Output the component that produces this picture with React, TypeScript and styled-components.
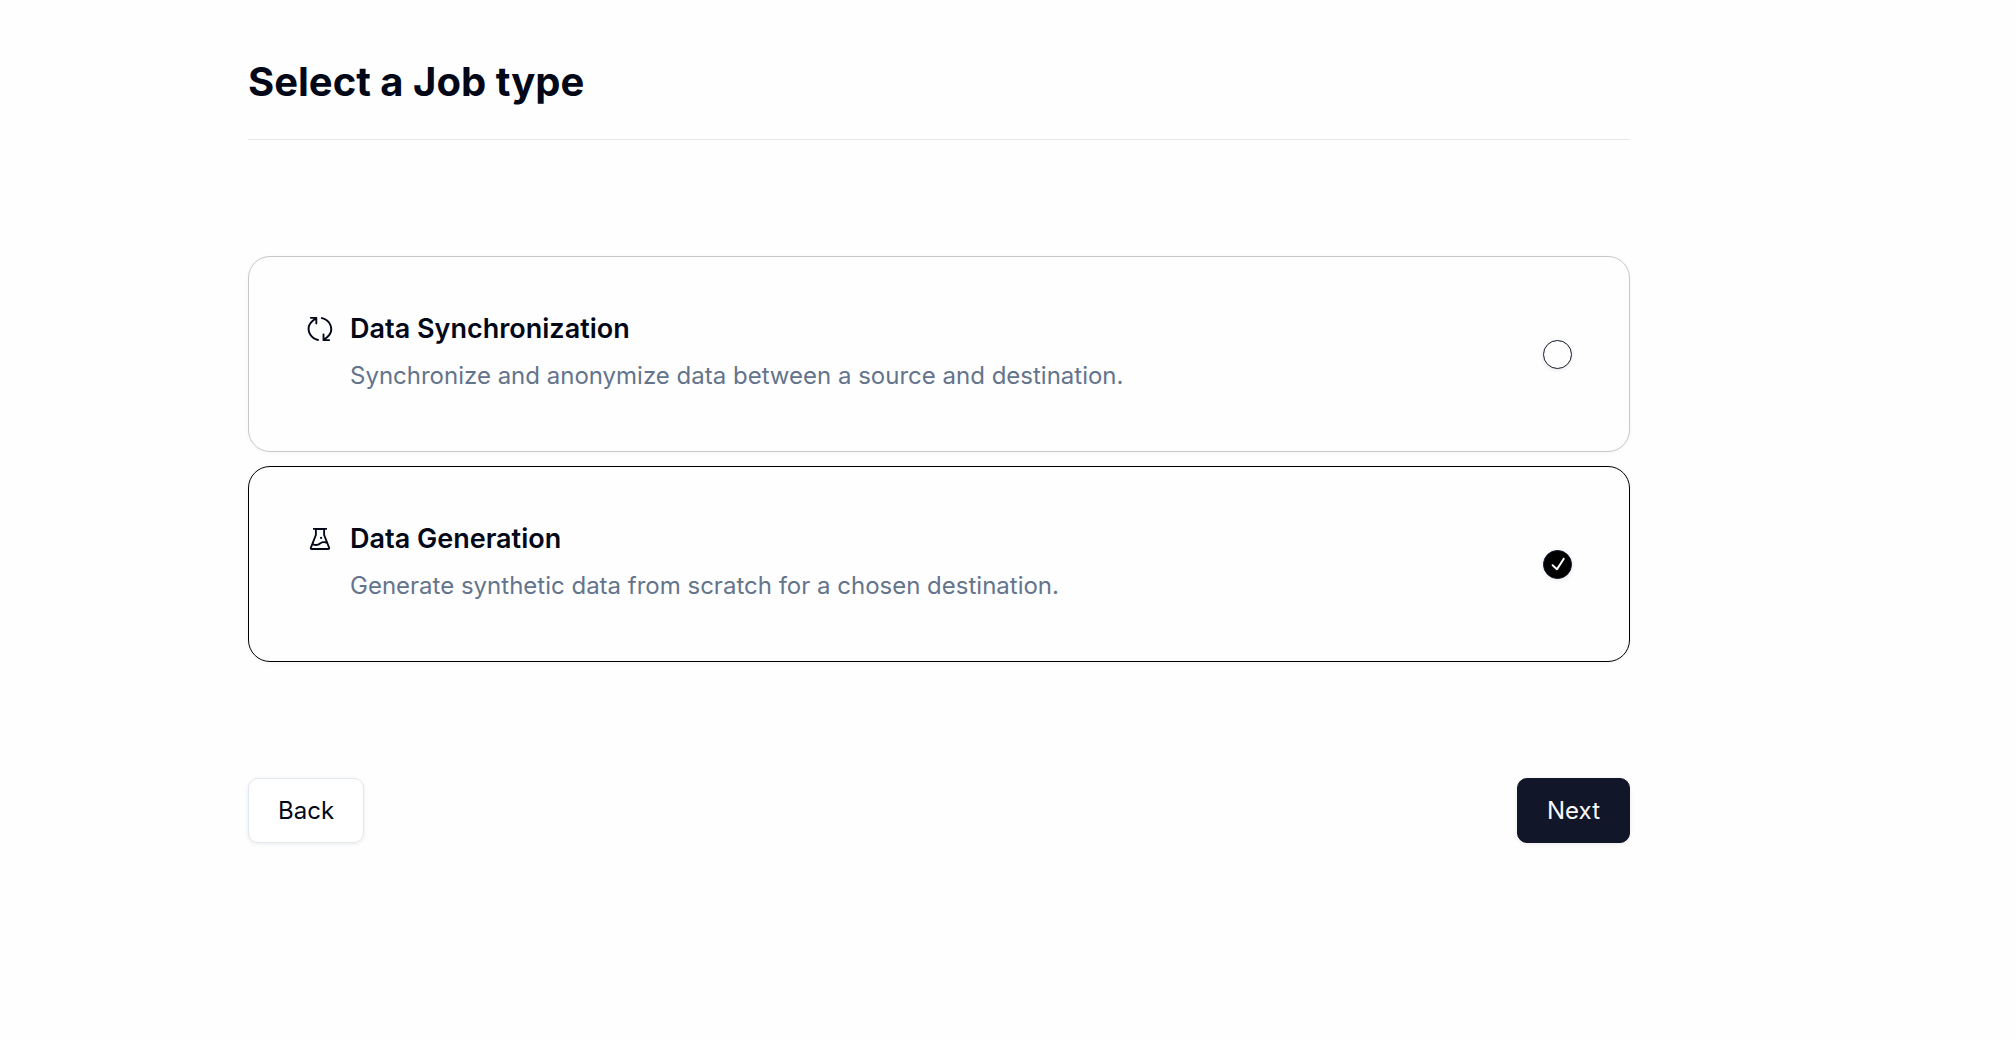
import React, { useState } from 'react';
import styled, { createGlobalStyle } from 'styled-components';
import { RxSymbol, RxCheck } from 'react-icons/rx';
import { AiOutlineExperiment } from 'react-icons/ai';

const GlobalStyle = createGlobalStyle`
  *, *::before, *::after {
    box-sizing: border-box;
  }

  body {
    margin: 0;
    background: #fefefe;
    color: #020817;
    font-family: Inter, 'Liberation Sans', sans-serif;
  }
`;

const Page = styled.main`
  padding: 52px 386px 48px 248px;
`;

const Header = styled.header`
  padding-bottom: 27px;
  border-bottom: 1px solid #e5e7eb;
`;

const Title = styled.h1`
  margin: 0;
  font-size: 40px;
  line-height: 60px;
  font-weight: 700;
`;

const Form = styled.form`
  display: flex;
  flex-direction: column;
  gap: 116px;
  padding-top: 116px;
`;

const Options = styled.div`
  display: flex;
  flex-direction: column;
  gap: 14px;
`;

const Card = styled.label<{ $selected: boolean }>`
  display: flex;
  align-items: center;
  justify-content: space-between;
  padding: 50px 57px;
  border: 1px solid ${(p) => (p.$selected ? '#000000' : '#c8c8c8')};
  border-radius: 22px;
  background: #fefefe;
  box-shadow: 0 1px 4px rgba(0, 0, 0, 0.04);
  cursor: pointer;
`;

const CardText = styled.span`
  display: grid;
  grid-template-columns: 28px 1fr;
  column-gap: 16px;
  align-items: center;
`;

const CardIcon = styled.span`
  display: grid;
  place-items: center;
`;

const CardTitle = styled.span`
  font-size: 27px;
  line-height: 44px;
  font-weight: 600;
`;

const CardDescription = styled.span`
  grid-column: 2;
  color: #64748b;
  font-size: 24px;
  line-height: 50px;
`;

const RadioBox = styled.span`
  display: grid;
  place-items: center;
  color: #ffffff;

  > * {
    grid-area: 1 / 1;
  }

  svg {
    pointer-events: none;
  }
`;

const Radio = styled.input`
  appearance: none;
  width: 29px;
  height: 29px;
  margin: 0;
  border: 1px solid #0f172a;
  border-radius: 50%;
  box-shadow: 0 1px 4px rgba(0, 0, 0, 0.1);
  cursor: pointer;

  &:checked {
    background: #000000;
  }
`;

const Actions = styled.div`
  display: flex;
  justify-content: space-between;
`;

const Button = styled.button<{ $primary?: boolean }>`
  height: 65px;
  padding: 0 29px;
  border: 1px solid ${(p) => (p.$primary ? '#111628' : '#e2e8f0')};
  border-radius: 10px;
  background: ${(p) => (p.$primary ? '#111628' : '#ffffff')};
  color: ${(p) => (p.$primary ? '#f8fafc' : '#020817')};
  box-shadow: 0 1px 4px rgba(0, 0, 0, 0.08);
  font-family: inherit;
  font-size: 24px;
  font-weight: 400;
  cursor: pointer;
`;

const jobTypes = [
  {
    id: 'data-sync',
    title: 'Data Synchronization',
    description: 'Synchronize and anonymize data between a source and destination.',
    icon: <RxSymbol size={28} />,
  },
  {
    id: 'data-generation',
    title: 'Data Generation',
    description: 'Generate synthetic data from scratch for a chosen destination.',
    icon: <AiOutlineExperiment size={28} />,
  },
];

export default function App() {
  const [selected, setSelected] = useState('data-generation');

  return (
    <>
      <GlobalStyle />
      <Page>
        <Header>
          <Title>Select a Job type</Title>
        </Header>
        <Form onSubmit={(e) => e.preventDefault()}>
          <Options role="radiogroup" aria-label="Job type">
            {jobTypes.map((job) => (
              <Card key={job.id} htmlFor={job.id} $selected={selected === job.id}>
                <CardText>
                  <CardIcon>{job.icon}</CardIcon>
                  <CardTitle>{job.title}</CardTitle>
                  <CardDescription>{job.description}</CardDescription>
                </CardText>
                <RadioBox>
                  <Radio
                    type="radio"
                    name="job-type"
                    id={job.id}
                    checked={selected === job.id}
                    onChange={() => setSelected(job.id)}
                  />
                  {selected === job.id && <RxCheck size={24} />}
                </RadioBox>
              </Card>
            ))}
          </Options>
          <Actions>
            <Button type="button">Back</Button>
            <Button type="submit" $primary>
              Next
            </Button>
          </Actions>
        </Form>
      </Page>
    </>
  );
}
